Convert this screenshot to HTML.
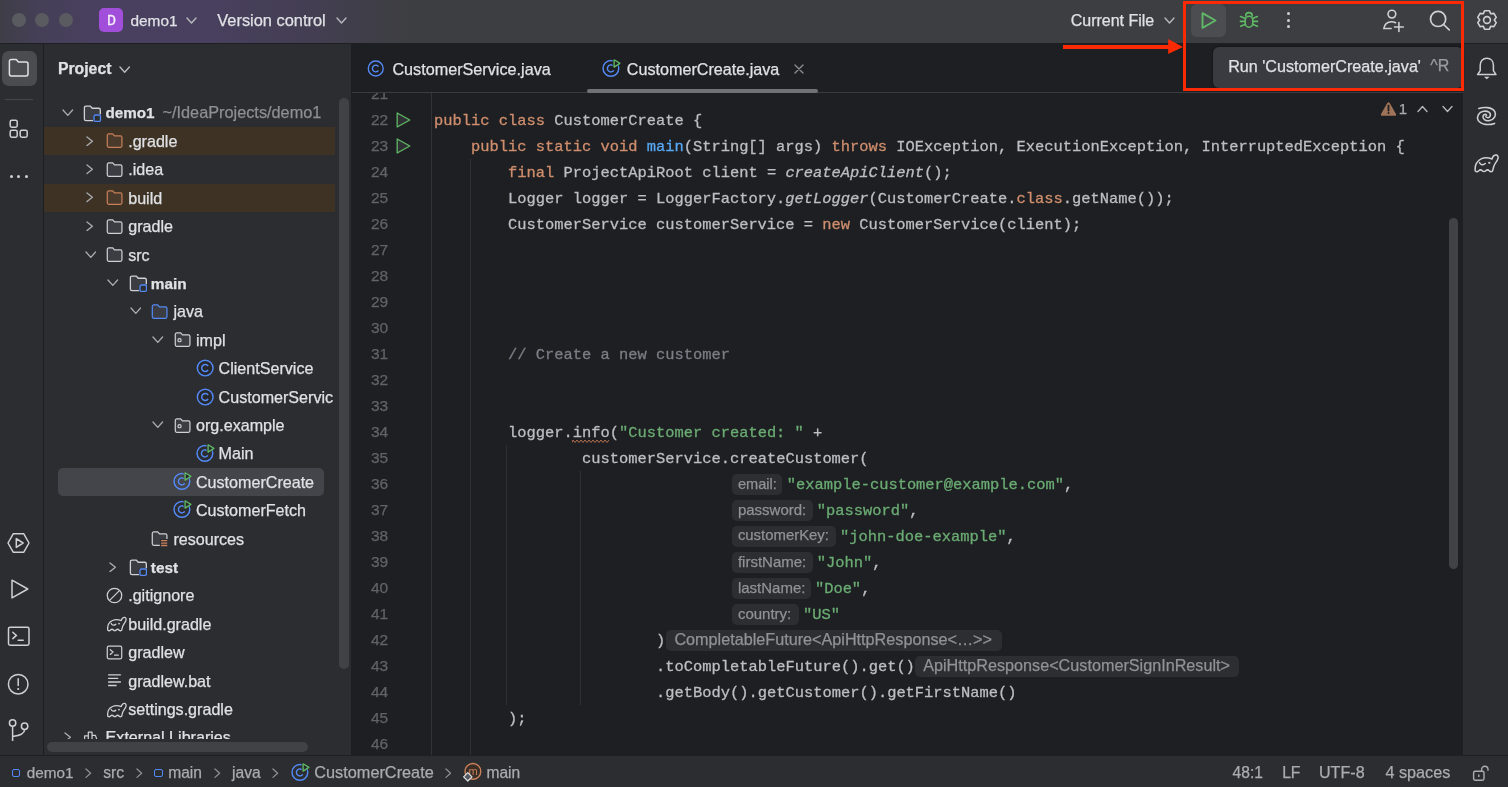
<!DOCTYPE html>
<html><head><meta charset="utf-8"><style>
html,body{margin:0;padding:0;}
body{width:1508px;height:787px;overflow:hidden;position:relative;background:#1E1F22;font-family:"Liberation Sans", sans-serif;}
.s{font-family:"Liberation Sans", sans-serif;}
#root{position:absolute;left:0;top:0;width:1508px;height:787px;will-change:transform;}
.s{-webkit-text-stroke:0.25px currentColor;}
.m, .m span{-webkit-text-stroke:0.3px currentColor;}
.m{font-family:"Liberation Mono", monospace;}
</style></head><body><div id="root">
<div style="position:absolute;left:0;top:0;width:1508px;height:43px;background:#3D3E41;"></div><div style="position:absolute;left:0;top:0;width:1508px;height:43px;background:linear-gradient(90deg,#3F3E47 0px,#453F58 40px,#48405E 90px,#48405E 210px,#443E54 300px,#3F3E47 375px,#3D3E41 415px);"></div><div style="position:absolute;left:0px;top:43px;width:1508px;height:1px;background:#1E1F22;"></div><div style="position:absolute;left:0px;top:44px;width:43px;height:711px;background:#2B2D30;"></div><div style="position:absolute;left:43px;top:44px;width:1px;height:711px;background:#1E1F22;"></div><div style="position:absolute;left:44px;top:44px;width:307px;height:711px;background:#2B2D30;"></div><div style="position:absolute;left:351px;top:44px;width:1px;height:711px;background:#1E1F22;"></div><div style="position:absolute;left:352px;top:44px;width:1111px;height:711px;background:#1E1F22;"></div><div style="position:absolute;left:1463px;top:44px;width:45px;height:711px;background:#2B2D30;"></div><div style="position:absolute;left:0px;top:755px;width:1508px;height:32px;background:#2B2D30;"></div><div style="position:absolute;left:0px;top:755px;width:1508px;height:1px;background:#1E1F22;"></div><div style="position:absolute;left:11.8px;top:13px;width:14px;height:14px;border-radius:50%;background:#5A5B61;"></div><div style="position:absolute;left:35.4px;top:13px;width:14px;height:14px;border-radius:50%;background:#5A5B61;"></div><div style="position:absolute;left:59px;top:13px;width:14px;height:14px;border-radius:50%;background:#5A5B61;"></div><div style="position:absolute;left:99px;top:8px;width:24px;height:24px;border-radius:5px;background:#A14FDB;"></div><div class="m" style="position:absolute;left:106.90px;top:14.31px;font-style:normal;font-weight:normal;font-size:15px;line-height:15px;color:#F4EEF8;white-space:pre;">D</div><div class="s" style="position:absolute;left:130.50px;top:12.86px;font-style:normal;font-weight:normal;font-size:15.4px;line-height:15.4px;color:#DFE1E5;white-space:pre;">demo1</div><svg style="position:absolute;left:185.5px;top:16.8px;" width="11" height="7" viewBox="0 0 11 7" fill="none"><polyline points="1,1 5.5,6 10,1" stroke="#B6B9BE" stroke-width="1.4" stroke-linecap="round" stroke-linejoin="round"/></svg><div class="s" style="position:absolute;left:217.30px;top:12.02px;font-style:normal;font-weight:normal;font-size:16.4px;line-height:16.4px;color:#DFE1E5;white-space:pre;">Version control</div><svg style="position:absolute;left:335.6px;top:16.8px;" width="11" height="7" viewBox="0 0 11 7" fill="none"><polyline points="1,1 5.5,6 10,1" stroke="#B6B9BE" stroke-width="1.4" stroke-linecap="round" stroke-linejoin="round"/></svg><div class="s" style="position:absolute;left:1070.70px;top:13.06px;font-style:normal;font-weight:normal;font-size:16px;line-height:16px;color:#DFE1E5;white-space:pre;">Current File</div><svg style="position:absolute;left:1164px;top:17.3px;" width="11" height="7" viewBox="0 0 11 7" fill="none"><polyline points="1,1 5.5,6 10,1" stroke="#B6B9BE" stroke-width="1.4" stroke-linecap="round" stroke-linejoin="round"/></svg><div style="position:absolute;left:1191px;top:4px;width:35px;height:33px;border-radius:6px;background:#4C4D51;"></div><svg style="position:absolute;left:1200px;top:11px;" width="18" height="19" viewBox="0 0 18 19" fill="none"><path d="M2.5 2.2 L15.5 9.5 L2.5 16.8 Z" stroke="#5FB865" stroke-width="1.9" stroke-linejoin="round"/></svg><svg style="position:absolute;left:1238px;top:10px;" width="22" height="20" viewBox="0 0 22 20" fill="none"><g stroke="#5FB865" stroke-width="1.6" stroke-linecap="round" fill="none"><path d="M7.7 5.9 a3.3 3.3 0 0 1 6.6 0"/><rect x="7.2" y="6.3" width="7.6" height="10.9" rx="3.8" ry="4.2"/><path d="M2.6 6.6 L6.9 8.3 M2.4 11.4 H6.9 M2.6 16.3 L6.9 14.4 M19.4 6.6 L15.1 8.3 M19.6 11.4 H15.1 M19.4 16.3 L15.1 14.4"/></g></svg><div style="position:absolute;left:1287.1000000000001px;top:12.200000000000001px;width:3.2px;height:3.2px;border-radius:50%;background:#CED0D6;"></div><div style="position:absolute;left:1287.1000000000001px;top:18.7px;width:3.2px;height:3.2px;border-radius:50%;background:#CED0D6;"></div><div style="position:absolute;left:1287.1000000000001px;top:25.2px;width:3.2px;height:3.2px;border-radius:50%;background:#CED0D6;"></div><svg style="position:absolute;left:1381px;top:9px;" width="24" height="24" viewBox="0 0 24 24" fill="none"><g stroke="#CED0D6" stroke-width="1.6" stroke-linecap="round" fill="none"><circle cx="10.9" cy="5.1" r="3.85"/><path d="M2.9 19.5 c0.2-4 3.4-6.8 7.5-6.8 c1.6 0 3 0.3 4.2 1"/><path d="M2.9 19.5 h7.2"/><path d="M17.9 13.6 v8.8 M13.5 18 h8.8"/></g></svg><svg style="position:absolute;left:1428px;top:10px;" width="24" height="22" viewBox="0 0 24 22" fill="none"><g stroke="#CED0D6" stroke-width="1.7" stroke-linecap="round" fill="none"><circle cx="10.1" cy="8.9" r="7.6"/><path d="M15.6 14.5 l5.6 5.4"/></g></svg><svg style="position:absolute;left:1475.7px;top:8.9px;" width="22" height="22" viewBox="0 0 22 22" fill="none"><polygon points="7.35,4.68 8.68,1.69 13.32,1.69 14.65,4.68 17.91,4.33 20.23,8.35 18.30,11.00 20.23,13.65 17.91,17.67 14.65,17.32 13.32,20.31 8.68,20.31 7.35,17.32 4.09,17.67 1.77,13.65 3.70,11.00 1.77,8.35 4.09,4.33" stroke="#CED0D6" stroke-width="1.6" stroke-linejoin="round" fill="none"/><circle cx="11" cy="11" r="3.4" stroke="#CED0D6" stroke-width="1.6"/></svg><div style="position:absolute;left:2px;top:51px;width:35px;height:35px;border-radius:7px;background:#4A4C50;"></div><svg style="position:absolute;left:8px;top:58px;" width="22" height="20" viewBox="0 0 22 20" fill="none"><path d="M1.4 3.2 a1.8 1.8 0 0 1 1.8 -1.8 h5 l2.2 2.5 h7.8 a1.8 1.8 0 0 1 1.8 1.8 v10.4 a1.8 1.8 0 0 1 -1.8 1.8 h-15 a1.8 1.8 0 0 1 -1.8 -1.8 z" stroke="#DFE1E5" stroke-width="1.5" fill="none" stroke-linejoin="round"/></svg><div style="position:absolute;left:5px;top:98.5px;width:28px;height:1px;background:#45474C;"></div><svg style="position:absolute;left:9px;top:119px;" width="20" height="20" viewBox="0 0 20 20" fill="none"><g stroke="#CED0D6" stroke-width="1.5" fill="none"><rect x="1.2" y="1.2" width="7" height="7" rx="1.6"/><rect x="1.2" y="11.2" width="7" height="7" rx="1.6"/><rect x="11.2" y="11.2" width="7" height="7" rx="1.6"/></g></svg><div style="position:absolute;left:9.5px;top:174.5px;width:3.4px;height:3.4px;border-radius:50%;background:#CED0D6;"></div><div style="position:absolute;left:17.1px;top:174.5px;width:3.4px;height:3.4px;border-radius:50%;background:#CED0D6;"></div><div style="position:absolute;left:24.7px;top:174.5px;width:3.4px;height:3.4px;border-radius:50%;background:#CED0D6;"></div><svg style="position:absolute;left:7px;top:532px;" width="24" height="22" viewBox="0 0 24 22" fill="none"><g stroke="#CED0D6" stroke-width="1.5" fill="none" stroke-linejoin="round"><path d="M6.2 1.8 h10.6 l5.2 9.2 l-5.2 9.2 h-10.6 l-5.2 -9.2 z"/><path d="M9.3 6.6 l6.8 4.4 l-6.8 4.4 z"/></g></svg><svg style="position:absolute;left:10px;top:578px;" width="20" height="22" viewBox="0 0 20 22" fill="none"><path d="M2 2.2 L17.8 11 L2 19.8 Z" stroke="#CED0D6" stroke-width="1.5" fill="none" stroke-linejoin="round"/></svg><svg style="position:absolute;left:7px;top:626px;" width="24" height="21" viewBox="0 0 24 21" fill="none"><g stroke="#CED0D6" stroke-width="1.5" fill="none"><rect x="1.5" y="1.2" width="20.5" height="18" rx="1.6"/><path d="M5.8 6.2 l3.6 3.2 l-3.6 3.2 M11.2 14.2 h5" stroke-linecap="round"/></g></svg><svg style="position:absolute;left:7px;top:673px;" width="23" height="23" viewBox="0 0 23 23" fill="none"><g stroke="#CED0D6" stroke-width="1.5" fill="none"><circle cx="11.2" cy="11.2" r="9.8"/><path d="M11.2 5.8 v6.6" stroke-linecap="round"/></g><circle cx="11.2" cy="16" r="1.1" fill="#CED0D6"/></svg><svg style="position:absolute;left:8px;top:718px;" width="22" height="25" viewBox="0 0 22 25" fill="none"><g stroke="#CED0D6" stroke-width="1.5" fill="none"><circle cx="4.6" cy="5" r="3.2"/><circle cx="16.6" cy="8.2" r="3.2"/><path d="M4.6 8.2 v14.8 M16.6 11.4 c0 4 -4 6 -12 7"/></g></svg><div class="s" style="position:absolute;left:57.90px;top:61.23px;font-style:normal;font-weight:bold;font-size:15.8px;line-height:15.8px;color:#DFE1E5;white-space:pre;">Project</div><svg style="position:absolute;left:118.8px;top:66.2px;" width="11.4" height="7.2" viewBox="0 0 11.4 7.2" fill="none"><polyline points="1,1 5.7,6.2 10.4,1" stroke="#B6B9BE" stroke-width="1.4" stroke-linecap="round" stroke-linejoin="round"/></svg><div style="position:absolute;left:44px;top:126.71px;width:291px;height:28.41px;background:#3D3223;"></div><div style="position:absolute;left:44px;top:183.53px;width:291px;height:28.41px;background:#3D3223;"></div><div style="position:absolute;left:58px;top:467.63px;width:266px;height:28.3px;border-radius:5px;background:#43454A;"></div><svg style="position:absolute;left:62.0px;top:108.60499999999999px;" width="11.6" height="7.4" viewBox="0 0 11.6 7.4" fill="none"><polyline points="1,1 5.8,6.4 10.6,1" stroke="#A9ACB2" stroke-width="1.35" stroke-linecap="round" stroke-linejoin="round"/></svg><svg style="position:absolute;left:83.40px;top:103.60px;" width="18.5" height="18.5" viewBox="0 0 16 16" fill="none"><path d="M1.2 3.2 a1.4 1.4 0 0 1 1.4 -1.4 h3.7 l1.7 1.9 h5.6 a1.4 1.4 0 0 1 1.4 1.4 v7.9 a1.4 1.4 0 0 1 -1.4 1.4 h-11 a1.4 1.4 0 0 1 -1.4 -1.4 z" stroke="#CED0D6" stroke-width="1.15" fill="#3B3D42"/><rect x="8.6" y="8.6" width="7.2" height="7.2" rx="1.6" fill="#2B2D30"/><rect x="9.5" y="9.5" width="5.6" height="5.6" rx="1.3" stroke="#548AF7" stroke-width="1.15" fill="#2B2D30"/></svg><div class="s" style="position:absolute;left:105.60px;top:105.23px;font-style:normal;font-weight:bold;font-size:15.2px;line-height:15.2px;color:#DFE1E5;white-space:pre;">demo1</div><div class="s" style="position:absolute;left:162.50px;top:104.30px;font-style:normal;font-weight:normal;font-size:16.3px;line-height:16.3px;color:#8C8F94;white-space:pre;">~/IdeaProjects/demo1</div><svg style="position:absolute;left:86.2px;top:135.61499999999998px;" width="7.4" height="10.6" viewBox="0 0 7.4 10.6" fill="none"><polyline points="1,1 6.4,5.3 1,9.6" stroke="#A9ACB2" stroke-width="1.35" stroke-linecap="round" stroke-linejoin="round"/></svg><svg style="position:absolute;left:105.80px;top:132.41px;" width="17" height="17" viewBox="0 0 16 16" fill="none"><path d="M1.2 3.2 a1.4 1.4 0 0 1 1.4 -1.4 h3.7 l1.7 1.9 h5.6 a1.4 1.4 0 0 1 1.4 1.4 v7.9 a1.4 1.4 0 0 1 -1.4 1.4 h-11 a1.4 1.4 0 0 1 -1.4 -1.4 z" stroke="#C7805A" stroke-width="1.15" fill="#4A3A2C"/></svg><div class="s" style="position:absolute;left:128.20px;top:132.88px;font-style:normal;font-weight:normal;font-size:16.1px;line-height:16.1px;color:#DFE1E5;white-space:pre;">.gradle</div><svg style="position:absolute;left:86.2px;top:164.025px;" width="7.4" height="10.6" viewBox="0 0 7.4 10.6" fill="none"><polyline points="1,1 6.4,5.3 1,9.6" stroke="#A9ACB2" stroke-width="1.35" stroke-linecap="round" stroke-linejoin="round"/></svg><svg style="position:absolute;left:105.80px;top:160.83px;" width="17" height="17" viewBox="0 0 16 16" fill="none"><path d="M1.2 3.2 a1.4 1.4 0 0 1 1.4 -1.4 h3.7 l1.7 1.9 h5.6 a1.4 1.4 0 0 1 1.4 1.4 v7.9 a1.4 1.4 0 0 1 -1.4 1.4 h-11 a1.4 1.4 0 0 1 -1.4 -1.4 z" stroke="#CED0D6" stroke-width="1.15" fill="#3B3D42"/></svg><div class="s" style="position:absolute;left:128.20px;top:161.29px;font-style:normal;font-weight:normal;font-size:16.1px;line-height:16.1px;color:#DFE1E5;white-space:pre;">.idea</div><svg style="position:absolute;left:86.2px;top:192.435px;" width="7.4" height="10.6" viewBox="0 0 7.4 10.6" fill="none"><polyline points="1,1 6.4,5.3 1,9.6" stroke="#A9ACB2" stroke-width="1.35" stroke-linecap="round" stroke-linejoin="round"/></svg><svg style="position:absolute;left:105.80px;top:189.24px;" width="17" height="17" viewBox="0 0 16 16" fill="none"><path d="M1.2 3.2 a1.4 1.4 0 0 1 1.4 -1.4 h3.7 l1.7 1.9 h5.6 a1.4 1.4 0 0 1 1.4 1.4 v7.9 a1.4 1.4 0 0 1 -1.4 1.4 h-11 a1.4 1.4 0 0 1 -1.4 -1.4 z" stroke="#C7805A" stroke-width="1.15" fill="#4A3A2C"/></svg><div class="s" style="position:absolute;left:128.20px;top:189.70px;font-style:normal;font-weight:normal;font-size:16.1px;line-height:16.1px;color:#DFE1E5;white-space:pre;">build</div><svg style="position:absolute;left:86.2px;top:220.845px;" width="7.4" height="10.6" viewBox="0 0 7.4 10.6" fill="none"><polyline points="1,1 6.4,5.3 1,9.6" stroke="#A9ACB2" stroke-width="1.35" stroke-linecap="round" stroke-linejoin="round"/></svg><svg style="position:absolute;left:105.80px;top:217.65px;" width="17" height="17" viewBox="0 0 16 16" fill="none"><path d="M1.2 3.2 a1.4 1.4 0 0 1 1.4 -1.4 h3.7 l1.7 1.9 h5.6 a1.4 1.4 0 0 1 1.4 1.4 v7.9 a1.4 1.4 0 0 1 -1.4 1.4 h-11 a1.4 1.4 0 0 1 -1.4 -1.4 z" stroke="#CED0D6" stroke-width="1.15" fill="#3B3D42"/></svg><div class="s" style="position:absolute;left:128.20px;top:218.11px;font-style:normal;font-weight:normal;font-size:16.1px;line-height:16.1px;color:#DFE1E5;white-space:pre;">gradle</div><svg style="position:absolute;left:84.6px;top:250.65500000000003px;" width="11.6" height="7.4" viewBox="0 0 11.6 7.4" fill="none"><polyline points="1,1 5.8,6.4 10.6,1" stroke="#A9ACB2" stroke-width="1.35" stroke-linecap="round" stroke-linejoin="round"/></svg><svg style="position:absolute;left:105.80px;top:246.06px;" width="17" height="17" viewBox="0 0 16 16" fill="none"><path d="M1.2 3.2 a1.4 1.4 0 0 1 1.4 -1.4 h3.7 l1.7 1.9 h5.6 a1.4 1.4 0 0 1 1.4 1.4 v7.9 a1.4 1.4 0 0 1 -1.4 1.4 h-11 a1.4 1.4 0 0 1 -1.4 -1.4 z" stroke="#CED0D6" stroke-width="1.15" fill="#3B3D42"/></svg><div class="s" style="position:absolute;left:128.20px;top:246.52px;font-style:normal;font-weight:normal;font-size:16.1px;line-height:16.1px;color:#DFE1E5;white-space:pre;">src</div><svg style="position:absolute;left:107.2px;top:279.065px;" width="11.6" height="7.4" viewBox="0 0 11.6 7.4" fill="none"><polyline points="1,1 5.8,6.4 10.6,1" stroke="#A9ACB2" stroke-width="1.35" stroke-linecap="round" stroke-linejoin="round"/></svg><svg style="position:absolute;left:128.60px;top:274.06px;" width="18.5" height="18.5" viewBox="0 0 16 16" fill="none"><path d="M1.2 3.2 a1.4 1.4 0 0 1 1.4 -1.4 h3.7 l1.7 1.9 h5.6 a1.4 1.4 0 0 1 1.4 1.4 v7.9 a1.4 1.4 0 0 1 -1.4 1.4 h-11 a1.4 1.4 0 0 1 -1.4 -1.4 z" stroke="#CED0D6" stroke-width="1.15" fill="#3B3D42"/><rect x="8.6" y="8.6" width="7.2" height="7.2" rx="1.6" fill="#2B2D30"/><rect x="9.5" y="9.5" width="5.6" height="5.6" rx="1.3" stroke="#548AF7" stroke-width="1.15" fill="#2B2D30"/></svg><div class="s" style="position:absolute;left:150.80px;top:275.52px;font-style:normal;font-weight:bold;font-size:15.4px;line-height:15.4px;color:#DFE1E5;white-space:pre;">main</div><svg style="position:absolute;left:129.8px;top:307.475px;" width="11.6" height="7.4" viewBox="0 0 11.6 7.4" fill="none"><polyline points="1,1 5.8,6.4 10.6,1" stroke="#A9ACB2" stroke-width="1.35" stroke-linecap="round" stroke-linejoin="round"/></svg><svg style="position:absolute;left:151.00px;top:302.88px;" width="17" height="17" viewBox="0 0 16 16" fill="none"><path d="M1.2 3.2 a1.4 1.4 0 0 1 1.4 -1.4 h3.7 l1.7 1.9 h5.6 a1.4 1.4 0 0 1 1.4 1.4 v7.9 a1.4 1.4 0 0 1 -1.4 1.4 h-11 a1.4 1.4 0 0 1 -1.4 -1.4 z" stroke="#548AF7" stroke-width="1.15" fill="#3B3D42"/></svg><div class="s" style="position:absolute;left:173.40px;top:303.34px;font-style:normal;font-weight:normal;font-size:16.1px;line-height:16.1px;color:#DFE1E5;white-space:pre;">java</div><svg style="position:absolute;left:152.4px;top:335.885px;" width="11.6" height="7.4" viewBox="0 0 11.6 7.4" fill="none"><polyline points="1,1 5.8,6.4 10.6,1" stroke="#A9ACB2" stroke-width="1.35" stroke-linecap="round" stroke-linejoin="round"/></svg><svg style="position:absolute;left:173.60px;top:331.28px;" width="17" height="17" viewBox="0 0 16 16" fill="none"><path d="M1.2 3.2 a1.4 1.4 0 0 1 1.4 -1.4 h3.7 l1.7 1.9 h5.6 a1.4 1.4 0 0 1 1.4 1.4 v7.9 a1.4 1.4 0 0 1 -1.4 1.4 h-11 a1.4 1.4 0 0 1 -1.4 -1.4 z" stroke="#CED0D6" stroke-width="1.15" fill="#3B3D42"/><circle cx="5.2" cy="8.6" r="1.5" stroke="#CED0D6" stroke-width="1.1"/></svg><div class="s" style="position:absolute;left:196.00px;top:331.75px;font-style:normal;font-weight:normal;font-size:16.1px;line-height:16.1px;color:#DFE1E5;white-space:pre;">impl</div><svg style="position:absolute;left:195.50px;top:358.19px;" width="20" height="20" viewBox="0 0 20 20" fill="none"><circle cx="9.2" cy="10" r="7.85" stroke="#548AF7" stroke-width="1.45" fill="#26282B"/><path d="M12.1 8.0 A3.5 3.5 0 1 0 12.1 12.0" stroke="#548AF7" stroke-width="1.45" fill="none"/></svg><div class="s" style="position:absolute;left:218.60px;top:360.16px;font-style:normal;font-weight:normal;font-size:16.1px;line-height:16.1px;color:#DFE1E5;white-space:pre;">ClientService</div><svg style="position:absolute;left:195.50px;top:386.61px;" width="20" height="20" viewBox="0 0 20 20" fill="none"><circle cx="9.2" cy="10" r="7.85" stroke="#548AF7" stroke-width="1.45" fill="#26282B"/><path d="M12.1 8.0 A3.5 3.5 0 1 0 12.1 12.0" stroke="#548AF7" stroke-width="1.45" fill="none"/></svg><div class="s" style="position:absolute;left:218.60px;top:388.57px;font-style:normal;font-weight:normal;font-size:16.1px;line-height:16.1px;color:#DFE1E5;white-space:pre;">CustomerServic</div><svg style="position:absolute;left:152.4px;top:421.115px;" width="11.6" height="7.4" viewBox="0 0 11.6 7.4" fill="none"><polyline points="1,1 5.8,6.4 10.6,1" stroke="#A9ACB2" stroke-width="1.35" stroke-linecap="round" stroke-linejoin="round"/></svg><svg style="position:absolute;left:173.60px;top:416.51px;" width="17" height="17" viewBox="0 0 16 16" fill="none"><path d="M1.2 3.2 a1.4 1.4 0 0 1 1.4 -1.4 h3.7 l1.7 1.9 h5.6 a1.4 1.4 0 0 1 1.4 1.4 v7.9 a1.4 1.4 0 0 1 -1.4 1.4 h-11 a1.4 1.4 0 0 1 -1.4 -1.4 z" stroke="#CED0D6" stroke-width="1.15" fill="#3B3D42"/><circle cx="5.2" cy="8.6" r="1.5" stroke="#CED0D6" stroke-width="1.1"/></svg><div class="s" style="position:absolute;left:196.00px;top:416.98px;font-style:normal;font-weight:normal;font-size:16.1px;line-height:16.1px;color:#DFE1E5;white-space:pre;">org.example</div><svg style="position:absolute;left:195.50px;top:442.62px;" width="20" height="20" viewBox="0 0 20 20" fill="none"><circle cx="8.9" cy="10.4" r="7.85" stroke="#548AF7" stroke-width="1.45" fill="none"/><path d="M11.8 8.4 A3.5 3.5 0 1 0 11.8 12.4" stroke="#548AF7" stroke-width="1.45" fill="none"/><path d="M10.6 0.2 L19.6 5.4 L10.6 10.8 Z" fill="#2B2D30"/><path d="M12.1 1.8 L17.9 5.4 L12.1 9.1 Z" stroke="#5FB865" stroke-width="1.35" stroke-linejoin="round" fill="#26282B"/></svg><div class="s" style="position:absolute;left:218.60px;top:445.39px;font-style:normal;font-weight:normal;font-size:16.1px;line-height:16.1px;color:#DFE1E5;white-space:pre;">Main</div><svg style="position:absolute;left:172.90px;top:471.03px;" width="20" height="20" viewBox="0 0 20 20" fill="none"><circle cx="8.9" cy="10.4" r="7.85" stroke="#548AF7" stroke-width="1.45" fill="none"/><path d="M11.8 8.4 A3.5 3.5 0 1 0 11.8 12.4" stroke="#548AF7" stroke-width="1.45" fill="none"/><path d="M10.6 0.2 L19.6 5.4 L10.6 10.8 Z" fill="#43454A"/><path d="M12.1 1.8 L17.9 5.4 L12.1 9.1 Z" stroke="#5FB865" stroke-width="1.35" stroke-linejoin="round" fill="#26282B"/></svg><div class="s" style="position:absolute;left:196.00px;top:473.80px;font-style:normal;font-weight:normal;font-size:16.1px;line-height:16.1px;color:#DFE1E5;white-space:pre;">CustomerCreate</div><svg style="position:absolute;left:172.90px;top:499.44px;" width="20" height="20" viewBox="0 0 20 20" fill="none"><circle cx="8.9" cy="10.4" r="7.85" stroke="#548AF7" stroke-width="1.45" fill="none"/><path d="M11.8 8.4 A3.5 3.5 0 1 0 11.8 12.4" stroke="#548AF7" stroke-width="1.45" fill="none"/><path d="M10.6 0.2 L19.6 5.4 L10.6 10.8 Z" fill="#2B2D30"/><path d="M12.1 1.8 L17.9 5.4 L12.1 9.1 Z" stroke="#5FB865" stroke-width="1.35" stroke-linejoin="round" fill="#26282B"/></svg><div class="s" style="position:absolute;left:196.00px;top:502.21px;font-style:normal;font-weight:normal;font-size:16.1px;line-height:16.1px;color:#DFE1E5;white-space:pre;">CustomerFetch</div><svg style="position:absolute;left:151.00px;top:530.15px;" width="17" height="17" viewBox="0 0 16 16" fill="none"><path d="M1.2 3.2 a1.4 1.4 0 0 1 1.4 -1.4 h3.7 l1.7 1.9 h5.6 a1.4 1.4 0 0 1 1.4 1.4 v7.9 a1.4 1.4 0 0 1 -1.4 1.4 h-11 a1.4 1.4 0 0 1 -1.4 -1.4 z" stroke="#CED0D6" stroke-width="1.15" fill="#3B3D42"/><rect x="8.3" y="8.5" width="7.7" height="7.5" fill="#2B2D30"/><path d="M9.5 10 h5.8 M9.5 12.3 h5.8 M9.5 14.6 h5.8" stroke="#C7805A" stroke-width="1.3"/></svg><div class="s" style="position:absolute;left:173.40px;top:530.62px;font-style:normal;font-weight:normal;font-size:16.1px;line-height:16.1px;color:#DFE1E5;white-space:pre;">resources</div><svg style="position:absolute;left:108.80000000000001px;top:561.7650000000001px;" width="7.4" height="10.6" viewBox="0 0 7.4 10.6" fill="none"><polyline points="1,1 6.4,5.3 1,9.6" stroke="#A9ACB2" stroke-width="1.35" stroke-linecap="round" stroke-linejoin="round"/></svg><svg style="position:absolute;left:128.60px;top:558.17px;" width="18.5" height="18.5" viewBox="0 0 16 16" fill="none"><path d="M1.2 3.2 a1.4 1.4 0 0 1 1.4 -1.4 h3.7 l1.7 1.9 h5.6 a1.4 1.4 0 0 1 1.4 1.4 v7.9 a1.4 1.4 0 0 1 -1.4 1.4 h-11 a1.4 1.4 0 0 1 -1.4 -1.4 z" stroke="#CED0D6" stroke-width="1.15" fill="#3B3D42"/><rect x="8.6" y="8.6" width="7.2" height="7.2" rx="1.6" fill="#2B2D30"/><rect x="9.5" y="9.5" width="5.6" height="5.6" rx="1.3" stroke="#548AF7" stroke-width="1.15" fill="#2B2D30"/></svg><div class="s" style="position:absolute;left:150.80px;top:559.62px;font-style:normal;font-weight:bold;font-size:15.4px;line-height:15.4px;color:#DFE1E5;white-space:pre;">test</div><svg style="position:absolute;left:105.80px;top:586.98px;" width="17" height="17" viewBox="0 0 16 16" fill="none"><circle cx="8" cy="8" r="6.8" stroke="#CED0D6" stroke-width="1.2"/><path d="M3.4 12.6 L12.6 3.4" stroke="#CED0D6" stroke-width="1.2"/></svg><div class="s" style="position:absolute;left:128.20px;top:587.44px;font-style:normal;font-weight:normal;font-size:16.1px;line-height:16.1px;color:#DFE1E5;white-space:pre;">.gitignore</div><svg style="position:absolute;left:106.30px;top:615.28px;" width="21" height="17" viewBox="0 0 21 17" fill="none"><path d="M1.8 15.2 C1.2 11 3 7 6.5 5.5 C9.5 4.2 13 4.8 15.2 5.6 C15.8 3.2 17.5 2 18.8 2.4 C20.2 2.8 20.4 4.6 19.6 6.2 C18.8 8 17.2 9.4 16.6 11.6 L15.6 15.3 C14.8 15.9 13.8 15.9 13 15 C12.2 14.2 11 14.2 10.2 15 C9.4 15.9 8.2 15.9 7.4 15 C6.6 14.2 5.4 14.2 4.6 15 C3.8 15.8 2.6 15.9 1.8 15.2 Z" stroke="#CED0D6" stroke-width="1.3" stroke-linejoin="round" fill="none"/><path d="M5.2 8.4 C5.8 10.4 8.2 10.8 9.8 9.2" stroke="#CED0D6" stroke-width="1.3" stroke-linecap="round" fill="none"/><circle cx="13" cy="8.6" r="0.9" fill="#CED0D6"/></svg><div class="s" style="position:absolute;left:128.20px;top:615.85px;font-style:normal;font-weight:normal;font-size:16.1px;line-height:16.1px;color:#DFE1E5;white-space:pre;">build.gradle</div><svg style="position:absolute;left:105.80px;top:643.79px;" width="17" height="17" viewBox="0 0 16 16" fill="none"><rect x="1.2" y="2" width="13.6" height="12" rx="1.6" stroke="#CED0D6" stroke-width="1.15"/><path d="M4 5.4 l2.6 2.2 l-2.6 2.2 M8 10.4 h3.6" stroke="#CED0D6" stroke-width="1.15" stroke-linecap="round"/></svg><div class="s" style="position:absolute;left:128.20px;top:644.26px;font-style:normal;font-weight:normal;font-size:16.1px;line-height:16.1px;color:#DFE1E5;white-space:pre;">gradlew</div><svg style="position:absolute;left:105.80px;top:672.21px;" width="17" height="17" viewBox="0 0 16 16" fill="none"><path d="M2 2.8 h12 M2 6.1 h9.5 M2 9.4 h12 M2 12.7 h8" stroke="#CED0D6" stroke-width="1.2"/></svg><div class="s" style="position:absolute;left:128.20px;top:672.67px;font-style:normal;font-weight:normal;font-size:16.1px;line-height:16.1px;color:#DFE1E5;white-space:pre;">gradlew.bat</div><svg style="position:absolute;left:106.30px;top:700.51px;" width="21" height="17" viewBox="0 0 21 17" fill="none"><path d="M1.8 15.2 C1.2 11 3 7 6.5 5.5 C9.5 4.2 13 4.8 15.2 5.6 C15.8 3.2 17.5 2 18.8 2.4 C20.2 2.8 20.4 4.6 19.6 6.2 C18.8 8 17.2 9.4 16.6 11.6 L15.6 15.3 C14.8 15.9 13.8 15.9 13 15 C12.2 14.2 11 14.2 10.2 15 C9.4 15.9 8.2 15.9 7.4 15 C6.6 14.2 5.4 14.2 4.6 15 C3.8 15.8 2.6 15.9 1.8 15.2 Z" stroke="#CED0D6" stroke-width="1.3" stroke-linejoin="round" fill="none"/><path d="M5.2 8.4 C5.8 10.4 8.2 10.8 9.8 9.2" stroke="#CED0D6" stroke-width="1.3" stroke-linecap="round" fill="none"/><circle cx="13" cy="8.6" r="0.9" fill="#CED0D6"/></svg><div class="s" style="position:absolute;left:128.20px;top:701.08px;font-style:normal;font-weight:normal;font-size:16.1px;line-height:16.1px;color:#DFE1E5;white-space:pre;">settings.gradle</div><svg style="position:absolute;left:63.599999999999994px;top:732.225px;" width="7.4" height="10.6" viewBox="0 0 7.4 10.6" fill="none"><polyline points="1,1 6.4,5.3 1,9.6" stroke="#A9ACB2" stroke-width="1.35" stroke-linecap="round" stroke-linejoin="round"/></svg><svg style="position:absolute;left:83.20px;top:729.02px;" width="17" height="17" viewBox="0 0 16 16" fill="none"><path d="M1.5 14.5 V6.5 h3.5 v8 M5 14.5 V3 h3.5 v11.5 M8.5 14.5 V6 h3.2 l2.8 8.5 M1 14.5 h14" stroke="#CED0D6" stroke-width="1.15" stroke-linejoin="round"/></svg><div class="s" style="position:absolute;left:105.60px;top:729.49px;font-style:normal;font-weight:normal;font-size:16.1px;line-height:16.1px;color:#DFE1E5;white-space:pre;">External Libraries</div><div style="position:absolute;left:44px;top:738.5px;width:307px;height:16.5px;background:#2B2D30;"></div><div style="position:absolute;left:335px;top:93px;width:16px;height:650px;background:#2B2D30;"></div><div style="position:absolute;left:339px;top:97.5px;width:9.5px;height:571px;border-radius:5px;background:#404246;"></div><div style="position:absolute;left:47px;top:742px;width:261px;height:9.7px;border-radius:5px;background:#404246;"></div><div style="position:absolute;left:431px;top:93px;width:1px;height:662px;background:#323438;"></div><div class="s" style="position:absolute;left:371.00px;top:85.58px;font-style:normal;font-weight:normal;font-size:15.5px;line-height:15.5px;color:#606368;white-space:pre;">21</div><div class="s" style="position:absolute;left:371.00px;top:111.58px;font-style:normal;font-weight:normal;font-size:15.5px;line-height:15.5px;color:#606368;white-space:pre;">22</div><div class="s" style="position:absolute;left:371.00px;top:137.58px;font-style:normal;font-weight:normal;font-size:15.5px;line-height:15.5px;color:#606368;white-space:pre;">23</div><div class="s" style="position:absolute;left:371.00px;top:163.58px;font-style:normal;font-weight:normal;font-size:15.5px;line-height:15.5px;color:#606368;white-space:pre;">24</div><div class="s" style="position:absolute;left:371.00px;top:189.58px;font-style:normal;font-weight:normal;font-size:15.5px;line-height:15.5px;color:#606368;white-space:pre;">25</div><div class="s" style="position:absolute;left:371.00px;top:215.58px;font-style:normal;font-weight:normal;font-size:15.5px;line-height:15.5px;color:#606368;white-space:pre;">26</div><div class="s" style="position:absolute;left:371.00px;top:241.58px;font-style:normal;font-weight:normal;font-size:15.5px;line-height:15.5px;color:#606368;white-space:pre;">27</div><div class="s" style="position:absolute;left:371.00px;top:267.58px;font-style:normal;font-weight:normal;font-size:15.5px;line-height:15.5px;color:#606368;white-space:pre;">28</div><div class="s" style="position:absolute;left:371.00px;top:293.58px;font-style:normal;font-weight:normal;font-size:15.5px;line-height:15.5px;color:#606368;white-space:pre;">29</div><div class="s" style="position:absolute;left:371.00px;top:319.58px;font-style:normal;font-weight:normal;font-size:15.5px;line-height:15.5px;color:#606368;white-space:pre;">30</div><div class="s" style="position:absolute;left:371.00px;top:345.58px;font-style:normal;font-weight:normal;font-size:15.5px;line-height:15.5px;color:#606368;white-space:pre;">31</div><div class="s" style="position:absolute;left:371.00px;top:371.58px;font-style:normal;font-weight:normal;font-size:15.5px;line-height:15.5px;color:#606368;white-space:pre;">32</div><div class="s" style="position:absolute;left:371.00px;top:397.58px;font-style:normal;font-weight:normal;font-size:15.5px;line-height:15.5px;color:#606368;white-space:pre;">33</div><div class="s" style="position:absolute;left:371.00px;top:423.58px;font-style:normal;font-weight:normal;font-size:15.5px;line-height:15.5px;color:#606368;white-space:pre;">34</div><div class="s" style="position:absolute;left:371.00px;top:449.58px;font-style:normal;font-weight:normal;font-size:15.5px;line-height:15.5px;color:#606368;white-space:pre;">35</div><div class="s" style="position:absolute;left:371.00px;top:475.58px;font-style:normal;font-weight:normal;font-size:15.5px;line-height:15.5px;color:#606368;white-space:pre;">36</div><div class="s" style="position:absolute;left:371.00px;top:501.58px;font-style:normal;font-weight:normal;font-size:15.5px;line-height:15.5px;color:#606368;white-space:pre;">37</div><div class="s" style="position:absolute;left:371.00px;top:527.58px;font-style:normal;font-weight:normal;font-size:15.5px;line-height:15.5px;color:#606368;white-space:pre;">38</div><div class="s" style="position:absolute;left:371.00px;top:553.58px;font-style:normal;font-weight:normal;font-size:15.5px;line-height:15.5px;color:#606368;white-space:pre;">39</div><div class="s" style="position:absolute;left:371.00px;top:579.58px;font-style:normal;font-weight:normal;font-size:15.5px;line-height:15.5px;color:#606368;white-space:pre;">40</div><div class="s" style="position:absolute;left:371.00px;top:605.58px;font-style:normal;font-weight:normal;font-size:15.5px;line-height:15.5px;color:#606368;white-space:pre;">41</div><div class="s" style="position:absolute;left:371.00px;top:631.58px;font-style:normal;font-weight:normal;font-size:15.5px;line-height:15.5px;color:#606368;white-space:pre;">42</div><div class="s" style="position:absolute;left:371.00px;top:657.58px;font-style:normal;font-weight:normal;font-size:15.5px;line-height:15.5px;color:#606368;white-space:pre;">43</div><div class="s" style="position:absolute;left:371.00px;top:683.58px;font-style:normal;font-weight:normal;font-size:15.5px;line-height:15.5px;color:#606368;white-space:pre;">44</div><div class="s" style="position:absolute;left:371.00px;top:709.58px;font-style:normal;font-weight:normal;font-size:15.5px;line-height:15.5px;color:#606368;white-space:pre;">45</div><div class="s" style="position:absolute;left:371.00px;top:735.58px;font-style:normal;font-weight:normal;font-size:15.5px;line-height:15.5px;color:#606368;white-space:pre;">46</div><svg style="position:absolute;left:395px;top:111.1px;" width="18" height="18" viewBox="0 0 18 18" fill="none"><path d="M2.2 2 L14.8 9 L2.2 16 Z" stroke="#5FB865" stroke-width="1.3" stroke-linejoin="round" fill="#2E3034"/></svg><svg style="position:absolute;left:395px;top:137.1px;" width="18" height="18" viewBox="0 0 18 18" fill="none"><path d="M2.2 2 L14.8 9 L2.2 16 Z" stroke="#5FB865" stroke-width="1.3" stroke-linejoin="round" fill="#2E3034"/></svg><div style="position:absolute;left:352px;top:44px;width:1111px;height:48px;background:#1E1F22;"></div><div style="position:absolute;left:352px;top:92px;width:1111px;height:1px;background:#393B40;"></div><svg style="position:absolute;left:367.20px;top:58.80px;" width="19" height="19" viewBox="0 0 20 20" fill="none"><circle cx="9.2" cy="10" r="7.85" stroke="#548AF7" stroke-width="1.45" fill="#1E1F22"/><path d="M12.1 8.0 A3.5 3.5 0 1 0 12.1 12.0" stroke="#548AF7" stroke-width="1.45" fill="none"/></svg><div class="s" style="position:absolute;left:392.40px;top:60.59px;font-style:normal;font-weight:normal;font-size:16.2px;line-height:16.2px;color:#DFE1E5;white-space:pre;">CustomerService.java</div><svg style="position:absolute;left:601.50px;top:57.50px;" width="20" height="20" viewBox="0 0 20 20" fill="none"><circle cx="8.9" cy="10.4" r="7.85" stroke="#548AF7" stroke-width="1.45" fill="none"/><path d="M11.8 8.4 A3.5 3.5 0 1 0 11.8 12.4" stroke="#548AF7" stroke-width="1.45" fill="none"/><path d="M10.6 0.2 L19.6 5.4 L10.6 10.8 Z" fill="#1E1F22"/><path d="M12.1 1.8 L17.9 5.4 L12.1 9.1 Z" stroke="#5FB865" stroke-width="1.35" stroke-linejoin="round" fill="#1E1F22"/></svg><div class="s" style="position:absolute;left:626.80px;top:60.63px;font-style:normal;font-weight:normal;font-size:16.15px;line-height:16.15px;color:#DFE1E5;white-space:pre;">CustomerCreate.java</div><svg style="position:absolute;left:794px;top:63.5px;" width="10" height="10" viewBox="0 0 10 10" fill="none"><path d="M1 1 L9 9 M9 1 L1 9" stroke="#8C8F94" stroke-width="1.3" stroke-linecap="round"/></svg><div style="position:absolute;left:587px;top:89px;width:231px;height:4px;border-radius:2px;background:#6F7277;"></div><div class="m" style="position:absolute;left:434.00px;top:113.79px;font-size:15.42px;line-height:15.42px;white-space:pre;color:#BCBEC4;"><span style="color:#CF8E6D;">public class </span><span style="color:#BCBEC4;">CustomerCreate {</span></div><div class="m" style="position:absolute;left:471.00px;top:139.79px;font-size:15.42px;line-height:15.42px;white-space:pre;color:#BCBEC4;"><span style="color:#CF8E6D;">public static void </span><span style="color:#56A8F5;">main</span><span style="color:#BCBEC4;">(String[] args) </span><span style="color:#CF8E6D;">throws </span><span style="color:#BCBEC4;">IOException, ExecutionException, InterruptedException {</span></div><div class="m" style="position:absolute;left:508.00px;top:165.79px;font-size:15.42px;line-height:15.42px;white-space:pre;color:#BCBEC4;"><span style="color:#CF8E6D;">final </span><span style="color:#BCBEC4;">ProjectApiRoot client = </span><span style="color:#BCBEC4;font-style:italic;">createApiClient</span><span style="color:#BCBEC4;">();</span></div><div class="m" style="position:absolute;left:508.00px;top:191.79px;font-size:15.42px;line-height:15.42px;white-space:pre;color:#BCBEC4;"><span style="color:#BCBEC4;">Logger logger = LoggerFactory.</span><span style="color:#BCBEC4;font-style:italic;">getLogger</span><span style="color:#BCBEC4;">(CustomerCreate.</span><span style="color:#CF8E6D;">class</span><span style="color:#BCBEC4;">.getName());</span></div><div class="m" style="position:absolute;left:508.00px;top:217.79px;font-size:15.42px;line-height:15.42px;white-space:pre;color:#BCBEC4;"><span style="color:#BCBEC4;">CustomerService customerService = </span><span style="color:#CF8E6D;">new </span><span style="color:#BCBEC4;">CustomerService(client);</span></div><div class="m" style="position:absolute;left:508.00px;top:347.79px;font-size:15.42px;line-height:15.42px;white-space:pre;color:#BCBEC4;"><span style="color:#7A7E85;">// Create a new customer</span></div><div class="m" style="position:absolute;left:508.00px;top:425.79px;font-size:15.42px;line-height:15.42px;white-space:pre;color:#BCBEC4;"><span style="color:#BCBEC4;">logger.info(</span><span style="color:#6AAB73;">&quot;Customer created: &quot;</span><span style="color:#BCBEC4;"> +</span></div><div class="m" style="position:absolute;left:582.00px;top:451.79px;font-size:15.42px;line-height:15.42px;white-space:pre;color:#BCBEC4;"><span style="color:#BCBEC4;">customerService.createCustomer(</span></div><div class="m" style="position:absolute;left:656.00px;top:685.79px;font-size:15.42px;line-height:15.42px;white-space:pre;color:#BCBEC4;"><span style="color:#BCBEC4;">.getBody().getCustomer().getFirstName()</span></div><div class="m" style="position:absolute;left:508.00px;top:711.79px;font-size:15.42px;line-height:15.42px;white-space:pre;color:#BCBEC4;"><span style="color:#BCBEC4;">);</span></div><div style="position:absolute;left:470px;top:158.6px;width:1px;height:596.4px;background:#2E3034;"></div><div style="position:absolute;left:506px;top:444.6px;width:1px;height:260px;background:#2E3034;"></div><div style="position:absolute;left:580px;top:470.6px;width:1px;height:234px;background:#2E3034;"></div><svg style="position:absolute;left:572px;top:439px;" width="38" height="5" viewBox="0 0 38 5" fill="none"><path d="M0 3.5 L1 1 L3 3.5 L5 1 L7 3.5 L9 1 L11 3.5 L13 1 L15 3.5 L17 1 L19 3.5 L21 1 L23 3.5 L25 1 L27 3.5 L29 1 L31 3.5 L33 1 L35 3.5 L37 1" stroke="#B5704E" stroke-width="1" fill="none"/></svg><div style="position:absolute;left:731.9px;top:473.60px;width:50.60px;height:21px;border-radius:5px;background:#2D2E31;"></div><div class="s" style="position:absolute;left:737.90px;top:476.74px;font-style:normal;font-weight:normal;font-size:14.6px;line-height:14.6px;color:#8F9297;white-space:pre;">email:</div><div class="m" style="position:absolute;left:786.70px;top:477.79px;font-size:15.42px;line-height:15.42px;white-space:pre;color:#BCBEC4;"><span style="color:#6AAB73">&quot;example-customer@example.com&quot;</span>,</div><div style="position:absolute;left:731.9px;top:499.60px;width:80.70px;height:21px;border-radius:5px;background:#2D2E31;"></div><div class="s" style="position:absolute;left:737.90px;top:502.40px;font-style:normal;font-weight:normal;font-size:15.0px;line-height:15.0px;color:#8F9297;white-space:pre;">password:</div><div class="m" style="position:absolute;left:816.80px;top:503.79px;font-size:15.42px;line-height:15.42px;white-space:pre;color:#BCBEC4;"><span style="color:#6AAB73">&quot;password&quot;</span>,</div><div style="position:absolute;left:731.9px;top:525.60px;width:103.90px;height:21px;border-radius:5px;background:#2D2E31;"></div><div class="s" style="position:absolute;left:737.90px;top:528.49px;font-style:normal;font-weight:normal;font-size:14.9px;line-height:14.9px;color:#8F9297;white-space:pre;">customerKey:</div><div class="m" style="position:absolute;left:840.00px;top:529.79px;font-size:15.42px;line-height:15.42px;white-space:pre;color:#BCBEC4;"><span style="color:#6AAB73">&quot;john-doe-example&quot;</span>,</div><div style="position:absolute;left:731.9px;top:551.60px;width:80.70px;height:21px;border-radius:5px;background:#2D2E31;"></div><div class="s" style="position:absolute;left:737.90px;top:554.40px;font-style:normal;font-weight:normal;font-size:15.0px;line-height:15.0px;color:#8F9297;white-space:pre;">firstName:</div><div class="m" style="position:absolute;left:816.80px;top:555.79px;font-size:15.42px;line-height:15.42px;white-space:pre;color:#BCBEC4;"><span style="color:#6AAB73">&quot;John&quot;</span>,</div><div style="position:absolute;left:731.9px;top:577.60px;width:78.80px;height:21px;border-radius:5px;background:#2D2E31;"></div><div class="s" style="position:absolute;left:737.90px;top:580.40px;font-style:normal;font-weight:normal;font-size:15.0px;line-height:15.0px;color:#8F9297;white-space:pre;">lastName:</div><div class="m" style="position:absolute;left:814.90px;top:581.79px;font-size:15.42px;line-height:15.42px;white-space:pre;color:#BCBEC4;"><span style="color:#6AAB73">&quot;Doe&quot;</span>,</div><div style="position:absolute;left:731.9px;top:603.60px;width:66.90px;height:21px;border-radius:5px;background:#2D2E31;"></div><div class="s" style="position:absolute;left:737.90px;top:606.40px;font-style:normal;font-weight:normal;font-size:15.0px;line-height:15.0px;color:#8F9297;white-space:pre;">country:</div><div class="m" style="position:absolute;left:803.00px;top:607.79px;font-size:15.42px;line-height:15.42px;white-space:pre;color:#BCBEC4;"><span style="color:#6AAB73">&quot;US&quot;</span></div><div class="m" style="position:absolute;left:656.00px;top:633.79px;font-size:15.42px;line-height:15.42px;white-space:pre;color:#BCBEC4;"><span style="color:#BCBEC4;">)</span></div><div style="position:absolute;left:665.5px;top:629.60px;width:336.50px;height:21px;border-radius:5px;background:#2D2E31;"></div><div class="s" style="position:absolute;left:674.40px;top:631.39px;font-style:normal;font-weight:normal;font-size:16.2px;line-height:16.2px;color:#8F9297;white-space:pre;">CompletableFuture&lt;ApiHttpResponse&lt;…&gt;&gt;</div><div class="m" style="position:absolute;left:656.00px;top:659.79px;font-size:15.42px;line-height:15.42px;white-space:pre;color:#BCBEC4;"><span style="color:#BCBEC4;">.toCompletableFuture().get()</span></div><div style="position:absolute;left:915px;top:655.60px;width:323.70px;height:21px;border-radius:5px;background:#2D2E31;"></div><div class="s" style="position:absolute;left:923.20px;top:657.39px;font-style:normal;font-weight:normal;font-size:16.2px;line-height:16.2px;color:#8F9297;white-space:pre;">ApiHttpResponse&lt;CustomerSignInResult&gt;</div><svg style="position:absolute;left:1380px;top:101px;" width="17" height="15" viewBox="0 0 17 15" fill="none"><path d="M8.5 1.2 c0.5 0 0.9 0.3 1.2 0.8 l6.3 11 c0.5 0.9 -0.1 1.8 -1.1 1.8 h-12.8 c-1 0 -1.6 -0.9 -1.1 -1.8 l6.3 -11 c0.3 -0.5 0.7 -0.8 1.2 -0.8 z" fill="#9E7358"/><path d="M8.5 4.6 v5" stroke="#1E1F22" stroke-width="1.8" stroke-linecap="round"/><circle cx="8.5" cy="12" r="1" fill="#1E1F22"/></svg><div class="s" style="position:absolute;left:1398.80px;top:101.00px;font-style:normal;font-weight:normal;font-size:15px;line-height:15px;color:#A8ABB0;white-space:pre;">1</div><svg style="position:absolute;left:1417px;top:104.5px;" width="12" height="8" viewBox="0 0 12 8" fill="none"><polyline points="1,6.5 5.5,1.5 10,6.5" stroke="#B6B9BE" stroke-width="1.3" fill="none" stroke-linecap="round" stroke-linejoin="round"/></svg><svg style="position:absolute;left:1442px;top:104.5px;" width="12" height="8" viewBox="0 0 12 8" fill="none"><polyline points="1,1.5 5.5,6.5 10,1.5" stroke="#B6B9BE" stroke-width="1.3" fill="none" stroke-linecap="round" stroke-linejoin="round"/></svg><div style="position:absolute;left:1449px;top:217.6px;width:9.4px;height:351px;border-radius:5px;background:#404246;"></div><svg style="position:absolute;left:1476px;top:57px;" width="22" height="24" viewBox="0 0 22 24" fill="none"><g stroke="#CED0D6" stroke-width="1.5" fill="none" stroke-linejoin="round"><path d="M10.8 1.2 c-4 0 -6.6 3 -6.6 7 v5.4 l-2.6 4 h18.4 l-2.6 -4 v-5.4 c0 -4 -2.6 -7 -6.6 -7 z"/></g><path d="M8 19.8 h5.6 l-2.8 2.4 z" fill="#CED0D6"/></svg><svg style="position:absolute;left:1472px;top:102px;" width="30" height="28" viewBox="0 0 30 28" fill="none"><g stroke="#CED0D6" stroke-width="1.55" fill="none" stroke-linecap="round"><path d="M6.8 6.5 C12 4.6 20 5 22.8 9.6 C24.6 13 22.6 17.6 17.6 18.5 C13.2 19.4 10.4 16.6 11 14.2 C11.5 12.2 13.4 11.8 14.6 13.2"/><path d="M22.6 21.4 C17 23.4 9 23 6.2 18.4 C4.4 15 6.5 10.2 11.5 9.3 C16 8.5 19.2 11 18.2 14 C17.5 16 15 16.2 13.8 14.6"/></g></svg><svg style="position:absolute;left:1472.6px;top:151.6px;" width="26.25" height="21.25" viewBox="0 0 21 17" fill="none"><path d="M1.8 15.2 C1.2 11 3 7 6.5 5.5 C9.5 4.2 13 4.8 15.2 5.6 C15.8 3.2 17.5 2 18.8 2.4 C20.2 2.8 20.4 4.6 19.6 6.2 C18.8 8 17.2 9.4 16.6 11.6 L15.6 15.3 C14.8 15.9 13.8 15.9 13 15 C12.2 14.2 11 14.2 10.2 15 C9.4 15.9 8.2 15.9 7.4 15 C6.6 14.2 5.4 14.2 4.6 15 C3.8 15.8 2.6 15.9 1.8 15.2 Z" stroke="#CED0D6" stroke-width="1.2" stroke-linejoin="round" fill="none"/><path d="M5.2 8.4 C5.8 10.4 8.2 10.8 9.8 9.2" stroke="#CED0D6" stroke-width="1.2" stroke-linecap="round" fill="none"/><circle cx="13" cy="8.6" r="0.9" fill="#CED0D6"/></svg><div style="position:absolute;left:11.6px;top:768.8px;width:6.6px;height:6.6px;border:1.3px solid #548AF7;border-radius:2px;"></div><div class="s" style="position:absolute;left:26.70px;top:764.85px;font-style:normal;font-weight:normal;font-size:15.3px;line-height:15.3px;color:#A9ACB1;white-space:pre;">demo1</div><svg style="position:absolute;left:85px;top:767.5px;" width="6.6" height="10.4" viewBox="0 0 6.6 10.4" fill="none"><polyline points="1,1 5.6,5.2 1,9.4" stroke="#8C8F94" stroke-width="1.3" stroke-linecap="round" stroke-linejoin="round"/></svg><div class="s" style="position:absolute;left:103.20px;top:764.59px;font-style:normal;font-weight:normal;font-size:15.6px;line-height:15.6px;color:#A9ACB1;white-space:pre;">src</div><svg style="position:absolute;left:136.4px;top:767.5px;" width="6.6" height="10.4" viewBox="0 0 6.6 10.4" fill="none"><polyline points="1,1 5.6,5.2 1,9.4" stroke="#8C8F94" stroke-width="1.3" stroke-linecap="round" stroke-linejoin="round"/></svg><div style="position:absolute;left:154.2px;top:768.8px;width:6.6px;height:6.6px;border:1.3px solid #548AF7;border-radius:2px;"></div><div class="s" style="position:absolute;left:168.20px;top:764.59px;font-style:normal;font-weight:normal;font-size:15.6px;line-height:15.6px;color:#A9ACB1;white-space:pre;">main</div><svg style="position:absolute;left:214.4px;top:767.5px;" width="6.6" height="10.4" viewBox="0 0 6.6 10.4" fill="none"><polyline points="1,1 5.6,5.2 1,9.4" stroke="#8C8F94" stroke-width="1.3" stroke-linecap="round" stroke-linejoin="round"/></svg><div class="s" style="position:absolute;left:232.00px;top:764.59px;font-style:normal;font-weight:normal;font-size:15.6px;line-height:15.6px;color:#A9ACB1;white-space:pre;">java</div><svg style="position:absolute;left:272px;top:767.5px;" width="6.6" height="10.4" viewBox="0 0 6.6 10.4" fill="none"><polyline points="1,1 5.6,5.2 1,9.4" stroke="#8C8F94" stroke-width="1.3" stroke-linecap="round" stroke-linejoin="round"/></svg><svg style="position:absolute;left:290.50px;top:761.50px;" width="20" height="20" viewBox="0 0 20 20" fill="none"><circle cx="8.9" cy="10.4" r="7.85" stroke="#548AF7" stroke-width="1.45" fill="none"/><path d="M11.8 8.4 A3.5 3.5 0 1 0 11.8 12.4" stroke="#548AF7" stroke-width="1.45" fill="none"/><path d="M10.6 0.2 L19.6 5.4 L10.6 10.8 Z" fill="#2B2D30"/><path d="M12.1 1.8 L17.9 5.4 L12.1 9.1 Z" stroke="#5FB865" stroke-width="1.35" stroke-linejoin="round" fill="#26282B"/></svg><div class="s" style="position:absolute;left:314.30px;top:764.00px;font-style:normal;font-weight:normal;font-size:16.3px;line-height:16.3px;color:#A9ACB1;white-space:pre;">CustomerCreate</div><svg style="position:absolute;left:444.8px;top:767.5px;" width="6.6" height="10.4" viewBox="0 0 6.6 10.4" fill="none"><polyline points="1,1 5.6,5.2 1,9.4" stroke="#8C8F94" stroke-width="1.3" stroke-linecap="round" stroke-linejoin="round"/></svg><svg style="position:absolute;left:462px;top:762px;" width="22" height="21" viewBox="0 0 22 21" fill="none"><circle cx="10.9" cy="9.4" r="7.9" fill="#3A2E26" stroke="#C7805A" stroke-width="1.4"/><text x="11.2" y="13.2" font-size="11" text-anchor="middle" fill="#C7805A" font-family="Liberation Sans">m</text><path d="M5.8 10.6 l4.2 4.2 l-4.2 4.2 l-4.2 -4.2 z" fill="#55585E" stroke="#DFE1E5" stroke-width="1.2" stroke-linejoin="round"/></svg><div class="s" style="position:absolute;left:486.40px;top:764.59px;font-style:normal;font-weight:normal;font-size:15.6px;line-height:15.6px;color:#A9ACB1;white-space:pre;">main</div><div class="s" style="position:absolute;left:1232.60px;top:764.59px;font-style:normal;font-weight:normal;font-size:15.6px;line-height:15.6px;color:#A9ACB1;white-space:pre;">48:1</div><div class="s" style="position:absolute;left:1282.20px;top:764.59px;font-style:normal;font-weight:normal;font-size:15.6px;line-height:15.6px;color:#A9ACB1;white-space:pre;">LF</div><div class="s" style="position:absolute;left:1319.00px;top:764.17px;font-style:normal;font-weight:normal;font-size:16.1px;line-height:16.1px;color:#A9ACB1;white-space:pre;">UTF-8</div><div class="s" style="position:absolute;left:1385.50px;top:764.09px;font-style:normal;font-weight:normal;font-size:16.2px;line-height:16.2px;color:#A9ACB1;white-space:pre;">4 spaces</div><svg style="position:absolute;left:1472px;top:765px;" width="19" height="17" viewBox="0 0 19 17" fill="none"><g stroke="#A9ACB1" stroke-width="1.4" fill="none"><rect x="1.6" y="6.2" width="10.4" height="9" rx="1.6"/><path d="M9.6 6.2 v-1.8 a3.2 3.2 0 0 1 6.4 0 v1.4"/><path d="M6.8 9.4 v2.6"/></g></svg><div style="position:absolute;left:1213.3px;top:47.2px;width:250px;height:40.4px;border-radius:6px;background:#393B40;box-shadow:0 0 3px rgba(0,0,0,0.5);"></div><div class="s" style="position:absolute;left:1228.20px;top:58.33px;font-style:normal;font-weight:normal;font-size:16.15px;line-height:16.15px;color:#DFE1E5;white-space:pre;">Run &#x27;CustomerCreate.java&#x27;</div><div class="s" style="position:absolute;left:1430.30px;top:58.46px;font-style:normal;font-weight:normal;font-size:16px;line-height:16px;color:#9A9DA2;white-space:pre;">^R</div><div style="position:absolute;left:1183px;top:1px;width:275.4px;height:84.4px;border:3.3px solid #FA2A04;"></div><div style="position:absolute;left:1063.3px;top:45.3px;width:108px;height:3.5px;background:#FA2A04;"></div><svg style="position:absolute;left:1168px;top:38px;" width="17" height="17" viewBox="0 0 17 17" fill="none"><path d="M0.2 1.1 L15 8.9 L0.2 16 Z" fill="#FA2A04"/></svg>
</div></body></html>
